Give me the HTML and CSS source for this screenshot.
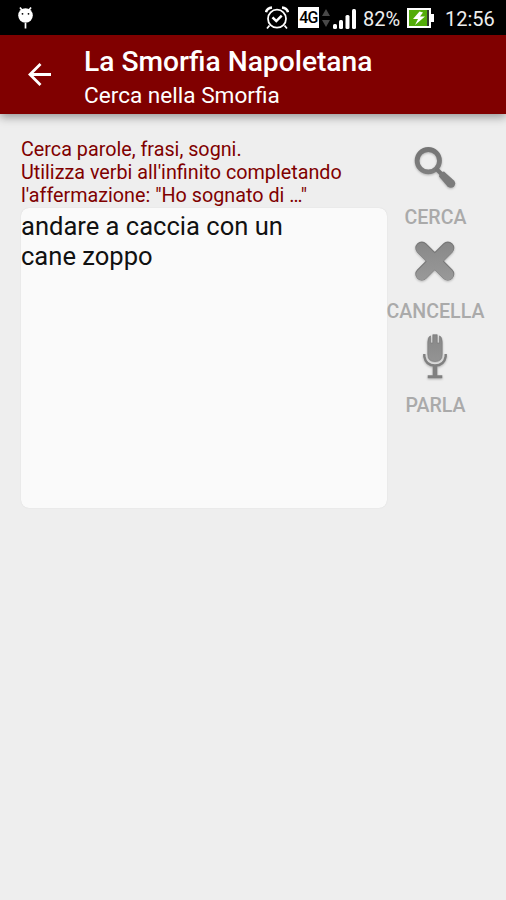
FILE: index.html
```html
<!DOCTYPE html>
<html lang="it">
<head>
<meta charset="utf-8">
<title>La Smorfia Napoletana</title>
<link rel="stylesheet" href="styles.css">
</head>
<body>
<div class="status">
  <svg class="bug" width="16" height="24" viewBox="0 0 16 24"><circle cx="7.500" cy="8.500" r="7.300" fill="#fff"/><path d="M2 .5l3 4M13 .5l-3 4M7.500 16v5.500" stroke="#fff" stroke-width="1.700"/><circle cx="4.500" cy="6.800" r=".9"/><circle cx="10.500" cy="6.800" r=".9"/></svg>
  <svg class="alarm" width="24" height="24" viewBox="0 0 24 24" fill="none" stroke="#fff" stroke-width="1.8"><circle cx="12" cy="12.7" r="9"/><path d="M1 6.2Q2 2 7 1.5M23 6.2Q22 2 17 1.5" stroke-width="2.6"/><path d="M4.5 19.5L2 22.500M19.500 19.500l2.500 3"/><path d="M7.500 11.300l3.800 3.800 5.400-5.400" stroke-width="2.500"/></svg>
  <span class="net">4G</span>
  <svg class="updown" width="8" height="18" viewBox="0 0 8 18" fill="#484848"><path d="M0 7L4 0l4 7zM0 11h8l-4 7z"/></svg>
  <svg class="signal" width="23" height="20" viewBox="0 0 23 20" fill="#fff"><rect y="15" width="4" height="5" rx="1.5"/><rect x="6" y="11" width="4" height="9" rx="1.5"/><rect x="12.5" y="6" width="4" height="14" rx="1.5"/><rect x="19" width="4" height="20" rx="1.5"/></svg>
  <span class="percent">82%</span>
  <svg class="battery" width="27" height="20" viewBox="0 0 27 20"><path d="M0 0h24v6h3v8h-3v6H0z" fill="#fff"/><path d="M2 2h18v16H2z" fill="#53ac09"/><path d="M20 2h2v16h-2z" fill="#343c30"/><path d="M12.500 3.500L6 11h5l-3 6 10-8.500h-5l3-4z" fill="#fff"/></svg>
  <span class="time">12:56</span>
</div>
<header class="appbar">
  <svg class="back" width="24" height="24" viewBox="0 0 24 24" fill="none" stroke="#fff" stroke-width="2.800"><path d="M23 12.500H3M12.500 2L2 12.500 12.500 23"/></svg>
  <div class="titles">
    <h1 class="title">La Smorfia Napoletana</h1>
    <div class="subtitle">Cerca nella Smorfia</div>
  </div>
</header>
<main class="content">
  <section class="form">
    <p class="hint">Cerca parole, frasi, sogni.<br>Utilizza verbi all'infinito completando<br>l'affermazione: "Ho sognato di …"</p>
    <div class="field">andare a caccia con un<br>cane zoppo</div>
  </section>
  <nav class="actions">
    <div class="action">
      <svg class="icon" width="48" height="48" viewBox="0 0 48 48"><defs><linearGradient id="g" gradientUnits="userSpaceOnUse" x1="0" y1="4" x2="0" y2="44"><stop stop-color="#747474"/><stop offset="1" stop-color="#848484"/></linearGradient><linearGradient id="x" gradientUnits="userSpaceOnUse" x1="0" y1="4" x2="0" y2="44"><stop stop-color="#888"/><stop offset="1" stop-color="#999"/></linearGradient></defs><circle cx="17.300" cy="17.700" r="11.200" fill="none" stroke="url(#g)" stroke-width="4.800"/><path d="M25 25.500l6 6" stroke="#777" stroke-width="4"/><path d="M28 33.500Q28.500 29 33 28.500L43 37.500Q45.500 40.500 43 43.500Q40 46 36.500 43.500Z" fill="#7b7b7b"/></svg>
      <span class="label">CERCA</span>
    </div>
    <div class="action">
      <svg class="icon" width="48" height="48" viewBox="0 0 48 48" fill="none" stroke-linecap="round"><path d="M10.800 11l26 26M36.800 11l-26 26" stroke="#777" stroke-width="13"/><path d="M10.800 11.500l26 26M36.800 11.500l-26 26" stroke="url(#x)" stroke-width="11.500"/></svg>
      <span class="label">CANCELLA</span>
    </div>
    <div class="action">
      <svg class="icon" width="48" height="48" viewBox="0 0 48 48"><path d="M16.800 11Q16.800 6 19.500 4.800V12h2.300V3.700h4.400V12h2.300V4.800q2.700 1.200 2.700 6.200v12.500q0 7-7.200 7t-7.200-7z" fill="url(#x)" stroke="#777" stroke-width=".6"/><path d="M13.300 23v2.500c1 6 4.700 9 10.700 9s9.700-3 10.700-9V23" fill="none" stroke="#808080" stroke-width="2.400"/><path d="M21.700 35h4.600v9.200h5v3H16.700v-3h5z" fill="#808080"/></svg>
      <span class="label">PARLA</span>
    </div>
  </nav>
</main>
</body>
</html>
```
FILE: styles.css
```css
* { box-sizing: border-box; }
body { margin: 0; height: 900px; background: #eee; font-family: Roboto, sans-serif; overflow: hidden; }
svg { display: block; flex: none; }
.status { display: flex; align-items: flex-start; height: 35px; padding-left: 18px; background: #000; color: #eee; font-size: 20px; line-height: 24px; }
.bug { margin-top: 7px; }
.alarm { margin: 6px 0 0 231px; }
.net { width: 21px; height: 21px; margin: 7px 0 0 9px; background: #fff; color: #000; font-size: 16px; font-weight: 500; line-height: 22px; text-align: center; letter-spacing: -.8px; }
.updown { margin: 9px 0 0 3px; }
.signal { margin: 9px 0 0 3px; }
.percent { width: 38px; margin: 7px 0 0 7px; white-space: nowrap; }
.battery { margin: 8px 0 0 6px; }
.time { margin: 7px 0 0 11px; white-space: nowrap; }
.appbar { display: flex; height: 79px; padding-left: 28px; background: #800000; color: #fff; box-shadow: 0 3px 9px rgba(0,0,0,.38); }
.back { margin-top: 27px; }
.titles { margin: 10px 0 0 32px; white-space: nowrap; }
.title { margin: 0; font-size: 28.200px; font-weight: 500; line-height: 34px; }
.subtitle { font-size: 22.600px; line-height: 33px; }
.content { display: flex; padding: 24px 21px 0; }
.form { width: 366px; flex: none; }
.hint { margin: 0; color: #800000; font-size: 19.750px; line-height: 23px; white-space: nowrap; }
.field { height: 300px; margin-top: 1px; padding-top: 3px; border-radius: 8px; background: #fafafa; box-shadow: 0 0 1px #ccc; color: #111; font-size: 25.550px; line-height: 30px; }
.actions { width: 97px; flex: none; padding-top: 5px; }
.action { display: flex; flex-direction: column; align-items: center; height: 94px; }
.icon { margin-right: 1px; filter: drop-shadow(0 1px 1px rgba(0,0,0,.25)); }
.label { margin-top: 15px; color: #aaa; font-size: 19.600px; font-weight: 500; line-height: 24px; }
```
